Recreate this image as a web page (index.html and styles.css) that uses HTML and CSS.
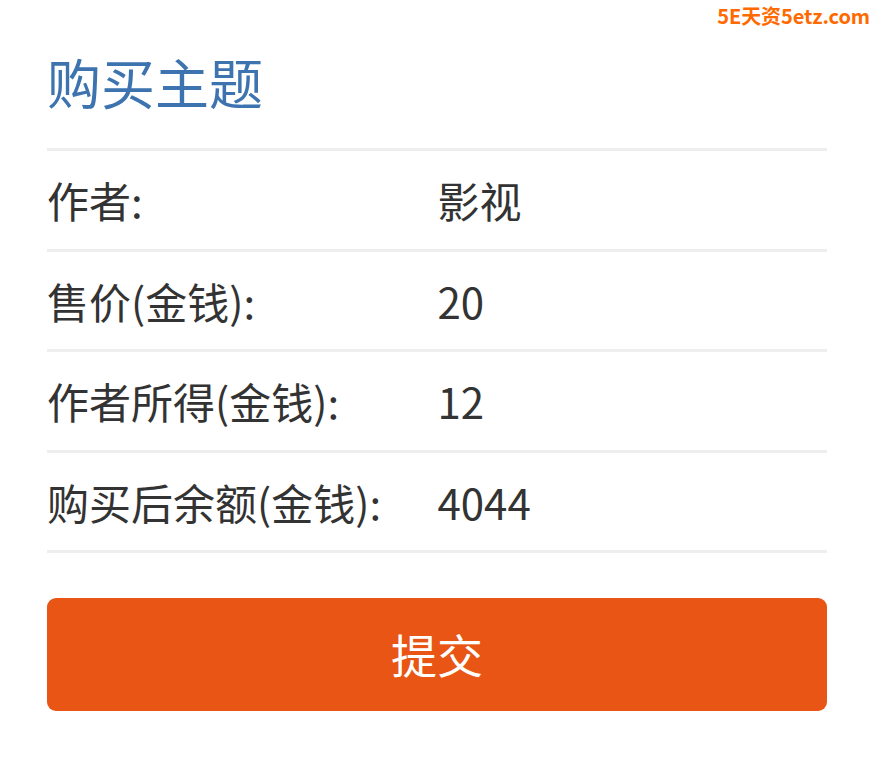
FILE: index.html
```html
<!DOCTYPE html>
<html lang="zh">
<head>
<meta charset="utf-8">
<link rel="stylesheet" href="styles.css">
</head>
<body>
<div class="watermark">5E天资5etz.com</div>
<div class="page">
  <h1 class="title">购买主题</h1>
  <div class="table">
    <div class="row"><div class="label">作者:</div><div class="value">影视</div></div>
    <div class="row"><div class="label">售价(金钱):</div><div class="value">20</div></div>
    <div class="row"><div class="label">作者所得(金钱):</div><div class="value">12</div></div>
    <div class="row"><div class="label">购买后余额(金钱):</div><div class="value">4044</div></div>
  </div>
  <button class="submit">提交</button>
</div>
</body>
</html>
```
FILE: styles.css
```css
html, body {
  margin: 0;
  padding: 0;
  background: #fff;
}
body {
  font-family: "Noto Sans CJK SC", "Noto Sans", sans-serif;
  color: #333;
  position: relative;
  width: 874px;
  height: 768px;
  overflow: hidden;
}
.watermark {
  position: absolute;
  top: 1px;
  right: 4px;
  font-size: 20px;
  font-weight: 700;
  color: #ff6a00;
  letter-spacing: -0.1px;
}
.page {
  padding: 0 47px;
}
.title {
  margin: 0;
  padding: 48px 0 33px;
  font-size: 54px;
  font-weight: 400;
  line-height: 67px;
  color: #3d74b0;
  border-bottom: 3px solid #eee;
}
.row {
  display: flex;
  height: 100.5px;
  box-sizing: border-box;
  border-bottom: 3px solid #eee;
  align-items: center;
  font-size: 42px;
}
.label, .value {
  flex: 1 1 50%;
}
.value {
  padding-left: 1px;
}
.submit {
  display: block;
  width: 100%;
  margin-top: 45px;
  height: 113px;
  border: none;
  border-radius: 9px;
  background: #e85514;
  color: #fff;
  font-family: "Noto Sans CJK SC", "Noto Sans", sans-serif;
  font-size: 46px;
  padding: 0 0 4px;
}
```
